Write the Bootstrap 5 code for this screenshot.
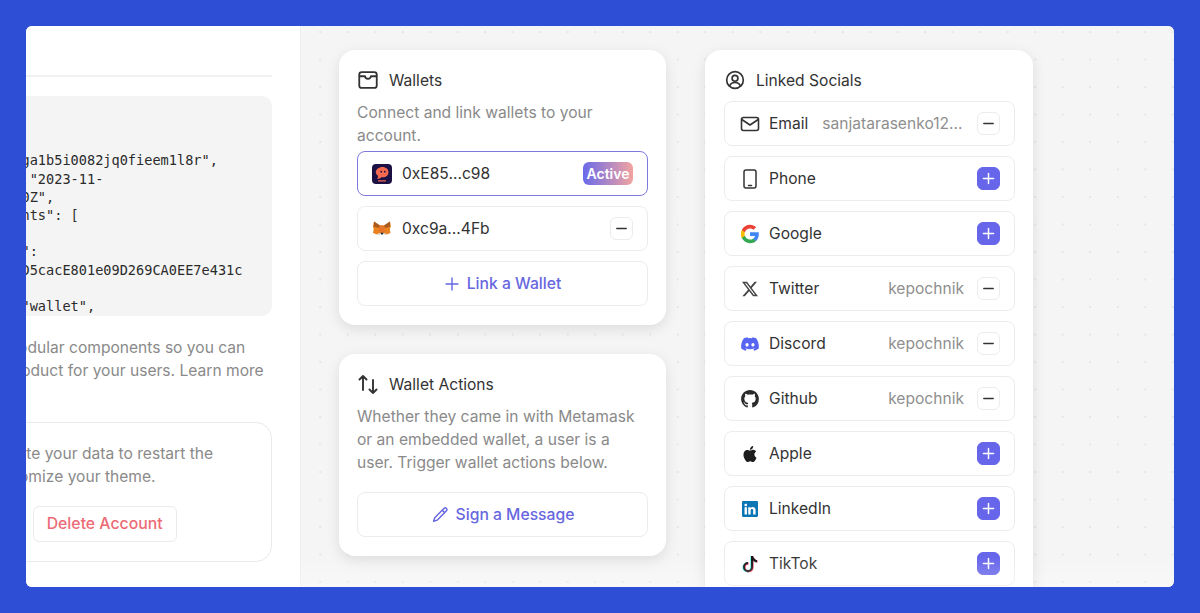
<!DOCTYPE html>
<html lang="en">

<head>
  <meta charset="UTF-8" />
  <meta name="viewport" content="width=device-width, initial-scale=1.0" />
  <title>Account dashboard</title>
  <link href="https://cdn.jsdelivr.net/npm/bootstrap@5.3.3/dist/css/bootstrap.min.css" rel="stylesheet" />
  <style>
    html, body { height: 100%; }
    body { background: #2e4fd5; padding: 26px; overflow: hidden; font-family: Inter, "Liberation Sans", sans-serif; color: #333; font-size: 15.6px; }
    .app-window { height: 561px; border-radius: 6px; overflow: hidden; background: #f5f5f5; position: relative; }
    .app-window::after { content: ""; position: absolute; left: 0; right: 0; bottom: 0; height: 30px; pointer-events: none; background: linear-gradient(rgba(255,255,255,0), rgba(255,255,255,.28)); }
    .side-panel { width: 275px; flex: none; background: #fff; border-right: 1px solid #eee; overflow: hidden; }
    .side-inner { width: 360px; margin-left: -86px; padding-right: 28px; flex: none; }
    .side-rule { height: 51px; border-bottom: 2px solid #f1f1f1; margin-bottom: 19px; }
    .code-box { margin: 0; height: 220px; overflow: hidden; background: #f4f4f4; border-radius: 10px; padding: 19px 16px 0; font-family: "DejaVu Sans Mono", monospace; font-size: 13.6px; line-height: 18.2px; color: #2b2b2b; }
    .side-text { margin: 20px 0 0; line-height: 23px; color: #8a8a8a; white-space: nowrap; }
    .danger-box { margin-top: 17px; height: 140px; border: 1px solid #eaeaea; border-radius: 16px; padding: 19px 28px; }
    .danger-box p { margin: 0 0 18px; line-height: 23px; color: #8a8a8a; white-space: nowrap; }
    .ghost-btn { height: 36px; padding: 0 13px; border: 1px solid #eaeaea; border-radius: 6px; background: #fff; font-weight: 500; font-size: 15.8px; white-space: nowrap; }
    .ghost-btn.red { color: #ec6b75; }
    .main-area { background-color: #f5f5f5; background-image: radial-gradient(circle, #e6e6e6 1px, transparent 1.4px); background-size: 27.5px 27.5px; background-position: 5.5px -7.75px; padding: 24px 0 0 38px; gap: 39px; min-width: 0; }
    .col-stack { width: 327px; flex: none; gap: 29px; }
    .col-stack.wide { width: 328px; }
    .panel-card { background: #fff; border-radius: 16px; padding: 18px 18px 19px; box-shadow: 0 4px 14px rgba(0,0,0,.1); }
    .wide .panel-card { padding-left: 19px; }
    .panel-title { height: 26px; margin-bottom: 7px; gap: 11px; line-height: 24px; padding-left: 1px; }
    .panel-title svg { width: 20px; height: 20px; flex: none; margin-top: -2px; }
    .panel-desc { margin: 0 0 4px; line-height: 23px; color: #8a8a8a; }
    .panel-desc.roomy { margin-bottom: 18px; }
    .stack-rows { gap: 10px; }
    .acct-row { height: 45px; border: 1px solid #ececec; border-radius: 8px; padding: 0 14px; background: #fff; }
    .acct-row.is-active { border-color: #7f79dc; }
    .acct-row .ico { width: 20px; height: 20px; flex: none; }
    .wallet-row { gap: 10px; }
    .social-row { gap: 9px; padding-left: 15px; }
    .acct-value { color: #8f8f8f; min-width: 0; margin-left: 5px; }
    .sq-btn { width: 23px; height: 23px; flex: none; border-radius: 6px; padding: 0; border: 1px solid #ececec; background: #fff; color: #333; }
    .sq-btn.add { background: #6766ea; border-color: #6766ea; color: #fff; }
    .sq-btn svg { width: 13px; height: 13px; display: block; margin: auto; }
    .active-tag { width: 50px; height: 23px; border-radius: 6px; background: linear-gradient(90deg, #6a6aea, #f2a3a0); color: #fff; font-weight: 600; font-size: 14px; line-height: 23px; text-align: center; }
    .link-row { height: 45px; border: 1px solid #ececec; border-radius: 8px; background: #fff; color: #6767e0; font-weight: 500; font-size: 15.7px; gap: 7px; width: 100%; }
    .link-row svg { width: 16px; height: 16px; }
    .link-row svg.pen { width: 18px; height: 18px; }
  </style>
</head>

<body>
  <div class="app-window d-flex">
    <aside class="side-panel d-flex">
      <div class="side-inner">
        <div class="side-rule"></div>
        <pre class="code-box">{
  "id":
clo7h3zqga1b5i0082jq0fieem1l8r",
 "time": "2023-11-
27T10:450Z",
  "accounts": [
    {
   "addr":
"0x71C2aD5cacE801e09D269CA0EE7e431c
",
"type": "wallet",</pre>
        <p class="side-text">Pick our modular components so you can<br>craft the product for your users. Learn more<br>here.</p>
        <div class="danger-box">
          <p>Or, delete your data to restart the<br>to customize your theme.</p>
          <div class="d-flex gap-2">
            <button class="ghost-btn" type="button">Exit</button>
            <button class="ghost-btn red" type="button">Delete Account</button>
          </div>
        </div>
      </div>
    </aside>

    <main class="main-area flex-grow-1 d-flex overflow-hidden">
      <div class="col-stack d-flex flex-column">
        <section class="panel-card">
          <div class="panel-title d-flex align-items-center">
            <svg viewBox="0 0 24 24" fill="none" stroke="#333" stroke-width="2.200" stroke-linecap="round" stroke-linejoin="round"><rect x="1.500" y="2.500" width="21" height="19" rx="3"/><path d="M2 7.500h6.500a3.500 3 0 0 0 7 0H22"/></svg>
            <span>Wallets</span>
          </div>
          <p class="panel-desc">Connect and link wallets to your account.</p>
          <div class="stack-rows d-flex flex-column">
            <div class="acct-row is-active wallet-row d-flex align-items-center">
              <svg class="ico" viewBox="0 0 20 20"><rect width="20" height="20" rx="4" fill="#1b1145"/><path d="M10.500 3c3.600 0 6 2.300 6 5.300 0 3.100-2.500 5-5.500 5l-1.700 0c-.9 1.300-2.300 1.800-4.300 1.700.8-.8 1.100-1.900.9-3.300C4.300 10.600 3.800 9.500 3.800 8.300 3.800 5.300 6.800 3 10.500 3z" fill="#f4694f"/><circle cx="9.200" cy="7.700" r=".9" fill="#1b1145"/><circle cx="12.800" cy="7.700" r=".9" fill="#1b1145"/><rect x="6" y="16.300" width="8" height="1.100" rx=".5" fill="#f4694f"/></svg>
              <span>0xE85...c98</span>
              <span class="active-tag ms-auto">Active</span>
            </div>
            <div class="acct-row wallet-row d-flex align-items-center">
              <svg class="ico" viewBox="0 0 20 20"><path d="M2 2.500 8 6.500h4l6-4 .8 5-1 2.500.7 4-4 1.500-1.500-1.200h-6L5 15.500 1 14l.7-4-.8-2.500z" fill="#e8811f"/><path d="M8 6.500 6.500 11 3 10zM12 6.500 13.500 11l3.500-1z" fill="#f6851b"/><path d="M8 6.500h4l1.500 4.500-1.500 2.800H8L6.500 11z" fill="#e4762b"/><path d="M2 2.500 8 6.500 6.500 9 1.800 7.500zM18 2.500l-6 4 1.500 2.500 4.700-1.500z" fill="#a85a1f"/><path d="M8.500 13.800h3l-.6 1.800H9.100z" fill="#23303f"/><path d="M5 15.500 8 13.800l-.3 2zM15 15.500l-3-1.700.3 2z" fill="#d8c3b2"/></svg>
              <span>0xc9a...4Fb</span>
              <button class="sq-btn ms-auto" type="button" aria-label="Unlink"><svg viewBox="0 0 14 14" fill="none" stroke="currentColor" stroke-width="1.700" stroke-linecap="round"><path d="M2 7h10"/></svg></button>
            </div>
            <button class="link-row d-flex align-items-center justify-content-center" type="button">
              <svg viewBox="0 0 16 16" fill="none" stroke="currentColor" stroke-width="1.400" stroke-linecap="round"><path d="M8 2v12M2 8h12"/></svg>
              Link a Wallet
            </button>
          </div>
        </section>

        <section class="panel-card">
          <div class="panel-title d-flex align-items-center">
            <svg viewBox="0 0 20 20" fill="none" stroke="#333" stroke-width="1.900" stroke-linecap="round" stroke-linejoin="round"><path d="M5 16V2M1.500 5.500 5 2l3.500 3.500M15 6v13M11.500 15.500 15 19l3.500-3.500"/></svg>
            <span>Wallet Actions</span>
          </div>
          <p class="panel-desc roomy">Whether they came in with Metamask or an embedded wallet, a user is a user. Trigger wallet actions below.</p>
          <button class="link-row d-flex align-items-center justify-content-center" type="button">
            <svg class="pen" viewBox="0 0 16 16" fill="none" stroke="currentColor" stroke-width="1.300" stroke-linecap="round" stroke-linejoin="round"><path d="M11.500 2.200a1.500 1.500 0 0 1 2.200 2.100L5.500 12.600l-3.200 1 1-3.100zM10 3.700l2.200 2.200"/></svg>
            Sign a Message
          </button>
        </section>
      </div>

      <div class="col-stack wide d-flex flex-column">
        <section class="panel-card">
          <div class="panel-title d-flex align-items-center">
            <svg viewBox="0 0 24 24" fill="none" stroke="#333" stroke-width="2" stroke-linecap="round" stroke-linejoin="round"><circle cx="12" cy="12" r="10"/><circle cx="12" cy="10" r="3.500"/><path d="M5.500 19.300c1-2.800 3.500-4.300 6.500-4.300s5.500 1.500 6.500 4.300"/></svg>
            <span>Linked Socials</span>
          </div>
          <div class="stack-rows d-flex flex-column">
            <div class="acct-row social-row d-flex align-items-center">
              <svg class="ico" viewBox="0 0 20 20" fill="none" stroke="#333" stroke-width="1.600" stroke-linecap="round" stroke-linejoin="round"><rect x="1.500" y="3.500" width="17" height="13" rx="2"/><path d="M1.800 5.500 10 11l8.200-5.500"/></svg>
              <span>Email</span>
              <span class="acct-value text-truncate flex-grow-1">sanjatarasenko12@gmail.com</span>
              <button class="sq-btn ms-1" type="button" aria-label="Unlink"><svg viewBox="0 0 14 14" fill="none" stroke="currentColor" stroke-width="1.700" stroke-linecap="round"><path d="M2 7h10"/></svg></button>
            </div>
            <div class="acct-row social-row d-flex align-items-center">
              <svg class="ico" viewBox="0 0 20 20" fill="none" stroke="#333" stroke-width="1.500" stroke-linecap="round" stroke-linejoin="round"><rect x="4" y="1" width="12" height="18" rx="2"/><path d="M8.500 16.500h3"/></svg>
              <span>Phone</span>
              <button class="sq-btn add ms-auto" type="button" aria-label="Link"><svg viewBox="0 0 14 14" fill="none" stroke="currentColor" stroke-width="1.600" stroke-linecap="round"><path d="M7 1.500v11M1.500 7h11"/></svg></button>
            </div>
            <div class="acct-row social-row d-flex align-items-center">
              <svg class="ico" viewBox="0 0 24 24"><path fill="#4285F4" d="M22.560 12.250c0-.78-.07-1.530-.2-2.250H12v4.260h5.920c-.26 1.370-1.040 2.530-2.210 3.310v2.770h3.570c2.080-1.920 3.280-4.740 3.280-8.090z"/><path fill="#34A853" d="M12 23c2.970 0 5.460-.98 7.280-2.660l-3.570-2.770c-.98.66-2.230 1.060-3.710 1.060-2.860 0-5.290-1.930-6.160-4.530H2.180v2.840C3.990 20.530 7.700 23 12 23z"/><path fill="#FBBC05" d="M5.840 14.090c-.22-.66-.35-1.360-.35-2.090s.13-1.430.35-2.090V7.070H2.180C1.430 8.550 1 10.220 1 12s.43 3.450 1.180 4.930l2.850-2.220.81-.62z"/><path fill="#EA4335" d="M12 5.380c1.620 0 3.060.56 4.210 1.640l3.150-3.150C17.450 2.090 14.970 1 12 1 7.700 1 3.990 3.470 2.180 7.070l3.660 2.840c.87-2.600 3.300-4.530 6.160-4.530z"/></svg>
              <span>Google</span>
              <button class="sq-btn add ms-auto" type="button" aria-label="Link"><svg viewBox="0 0 14 14" fill="none" stroke="currentColor" stroke-width="1.600" stroke-linecap="round"><path d="M7 1.500v11M1.500 7h11"/></svg></button>
            </div>
            <div class="acct-row social-row d-flex align-items-center">
              <svg class="ico" viewBox="-2 -2 20 20" fill="#444"><path d="M12.600.75h2.454l-5.360 6.142L16 15.250h-4.937l-3.867-5.070-4.425 5.070H.316l5.733-6.570L0 .75h5.063l3.495 4.633L12.601.75Zm-.86 13.028h1.360L4.323 2.145H2.865l8.875 11.633Z"/></svg>
              <span>Twitter</span>
              <span class="acct-value text-truncate ms-auto">kepochnik</span>
              <button class="sq-btn ms-1" type="button" aria-label="Unlink"><svg viewBox="0 0 14 14" fill="none" stroke="currentColor" stroke-width="1.700" stroke-linecap="round"><path d="M2 7h10"/></svg></button>
            </div>
            <div class="acct-row social-row d-flex align-items-center">
              <svg class="ico" viewBox="-1 -1 18 18" fill="#5865f2"><path d="M13.545 2.907a13.227 13.227 0 0 0-3.257-1.011.05.05 0 0 0-.052.025c-.141.25-.297.577-.406.833a12.19 12.19 0 0 0-3.658 0 8.258 8.258 0 0 0-.412-.833.051.051 0 0 0-.052-.025c-1.125.194-2.220.534-3.257 1.011a.041.041 0 0 0-.021.018C.356 6.024-.213 9.047.066 12.032c.001.014.01.028.021.037a13.276 13.276 0 0 0 3.995 2.020.05.05 0 0 0 .056-.019c.308-.42.582-.863.818-1.329a.05.05 0 0 0-.01-.059.051.051 0 0 0-.018-.011 8.875 8.875 0 0 1-1.248-.595.05.05 0 0 1-.02-.066.051.051 0 0 1 .015-.019c.084-.063.168-.129.248-.195a.05.05 0 0 1 .051-.007c2.619 1.196 5.454 1.196 8.041 0a.052.052 0 0 1 .053.007c.08.066.164.132.248.195a.051.051 0 0 1-.004.085 8.254 8.254 0 0 1-1.249.594.05.05 0 0 0-.03.03.052.052 0 0 0 .003.041c.24.465.515.909.817 1.329a.05.05 0 0 0 .056.019 13.235 13.235 0 0 0 4.001-2.020.049.049 0 0 0 .021-.037c.334-3.451-.559-6.449-2.366-9.106a.034.034 0 0 0-.02-.019Zm-8.198 7.307c-.789 0-1.438-.724-1.438-1.612 0-.889.637-1.613 1.438-1.613.807 0 1.450.73 1.438 1.613 0 .888-.637 1.612-1.438 1.612Zm5.316 0c-.788 0-1.438-.724-1.438-1.612 0-.889.637-1.613 1.438-1.613.807 0 1.451.73 1.438 1.613 0 .888-.631 1.612-1.438 1.612Z"/></svg>
              <span>Discord</span>
              <span class="acct-value text-truncate ms-auto">kepochnik</span>
              <button class="sq-btn ms-1" type="button" aria-label="Unlink"><svg viewBox="0 0 14 14" fill="none" stroke="currentColor" stroke-width="1.700" stroke-linecap="round"><path d="M2 7h10"/></svg></button>
            </div>
            <div class="acct-row social-row d-flex align-items-center">
              <svg class="ico" viewBox="-1 -1 18 18" fill="#2b2b2b"><path d="M8 0C3.580 0 0 3.580 0 8c0 3.540 2.290 6.530 5.470 7.590.4.07.55-.17.55-.38 0-.19-.01-.82-.01-1.490-2.010.37-2.530-.49-2.690-.94-.09-.23-.48-.94-.82-1.130-.28-.15-.68-.52-.01-.53.63-.01 1.080.58 1.230.82.72 1.210 1.870.87 2.330.66.07-.52.28-.87.51-1.070-1.780-.2-3.640-.89-3.640-3.950 0-.87.31-1.590.82-2.150-.08-.2-.36-1.020.08-2.120 0 0 .67-.21 2.200.82.64-.18 1.320-.27 2-.27.68 0 1.360.09 2 .27 1.530-1.040 2.200-.82 2.200-.82.44 1.100.16 1.920.08 2.120.51.56.82 1.270.82 2.150 0 3.070-1.870 3.750-3.650 3.950.29.25.54.73.54 1.480 0 1.070-.01 1.930-.01 2.200 0 .21.15.46.55.38A8.012 8.012 0 0 0 16 8c0-4.420-3.580-8-8-8z"/></svg>
              <span>Github</span>
              <span class="acct-value text-truncate ms-auto">kepochnik</span>
              <button class="sq-btn ms-1" type="button" aria-label="Unlink"><svg viewBox="0 0 14 14" fill="none" stroke="currentColor" stroke-width="1.700" stroke-linecap="round"><path d="M2 7h10"/></svg></button>
            </div>
            <div class="acct-row social-row d-flex align-items-center">
              <svg class="ico" viewBox="-2 -2 20 20" fill="#1d1d1d"><path d="M11.182.008C11.148-.03 9.923.023 8.857 1.180c-1.066 1.156-.902 2.482-.878 2.516.024.034 1.520.087 2.475-1.258.955-1.345.762-2.391.728-2.430Zm3.314 11.733c-.048-.096-2.325-1.234-2.113-3.422.212-2.189 1.675-2.789 1.698-2.854.023-.065-.597-.79-1.254-1.157a3.692 3.692 0 0 0-1.563-.434c-.108-.003-.483-.095-1.254.116-.508.139-1.653.589-1.968.607-.316.018-1.256-.522-2.267-.665-.647-.125-1.333.131-1.824.328-.49.196-1.422.754-2.074 2.237-.652 1.482-.311 3.830-.067 4.560.244.729.625 1.924 1.273 2.796.576.984 1.340 1.667 1.659 1.899.319.232 1.219.386 1.843.067.502-.308 1.408-.485 1.766-.472.357.013 1.061.154 1.782.539.571.197 1.111.115 1.652-.105.541-.221 1.324-1.059 2.238-2.758.347-.79.505-1.217.473-1.282Z"/></svg>
              <span>Apple</span>
              <button class="sq-btn add ms-auto" type="button" aria-label="Link"><svg viewBox="0 0 14 14" fill="none" stroke="currentColor" stroke-width="1.600" stroke-linecap="round"><path d="M7 1.500v11M1.500 7h11"/></svg></button>
            </div>
            <div class="acct-row social-row d-flex align-items-center">
              <svg class="ico" viewBox="-2 -2 20 20" fill="#0a76b4"><path d="M0 1.146C0 .513.526 0 1.175 0h13.650C15.474 0 16 .513 16 1.146v13.708c0 .633-.526 1.146-1.175 1.146H1.175C.526 16 0 15.487 0 14.854V1.146zm4.943 12.248V6.169H2.542v7.225h2.401zm-1.200-8.212c.837 0 1.358-.554 1.358-1.248-.015-.709-.52-1.248-1.342-1.248-.822 0-1.359.54-1.359 1.248 0 .694.521 1.248 1.327 1.248h.016zm4.908 8.212V9.359c0-.216.016-.432.08-.586.173-.431.568-.878 1.232-.878.869 0 1.216.662 1.216 1.634v3.865h2.401V9.250c0-2.220-1.184-3.252-2.764-3.252-1.274 0-1.845.7-2.165 1.193v.025h-.016a5.540 5.540 0 0 1 .016-.025V6.169h-2.400c.03.678 0 7.225 0 7.225h2.400z"/></svg>
              <span>LinkedIn</span>
              <button class="sq-btn add ms-auto" type="button" aria-label="Link"><svg viewBox="0 0 14 14" fill="none" stroke="currentColor" stroke-width="1.600" stroke-linecap="round"><path d="M7 1.500v11M1.500 7h11"/></svg></button>
            </div>
            <div class="acct-row social-row d-flex align-items-center">
              <svg class="ico" viewBox="-2 -2 20 20"><path fill="#25f4ee" transform="translate(-.6 .5)" d="M9 0h1.980c.144.715.54 1.617 1.235 2.512C12.895 3.389 13.797 4 15 4v2c-1.753 0-3.070-.814-4-1.829V11a5 5 0 1 1-5-5v2a3 3 0 1 0 3 3V0Z"/><path fill="#fe2c55" transform="translate(.6 .5)" d="M9 0h1.980c.144.715.54 1.617 1.235 2.512C12.895 3.389 13.797 4 15 4v2c-1.753 0-3.070-.814-4-1.829V11a5 5 0 1 1-5-5v2a3 3 0 1 0 3 3V0Z"/><path fill="#161616" d="M9 0h1.980c.144.715.54 1.617 1.235 2.512C12.895 3.389 13.797 4 15 4v2c-1.753 0-3.070-.814-4-1.829V11a5 5 0 1 1-5-5v2a3 3 0 1 0 3 3V0Z"/></svg>
              <span>TikTok</span>
              <button class="sq-btn add ms-auto" type="button" aria-label="Link"><svg viewBox="0 0 14 14" fill="none" stroke="currentColor" stroke-width="1.600" stroke-linecap="round"><path d="M7 1.500v11M1.500 7h11"/></svg></button>
            </div>
          </div>
        </section>
      </div>
    </main>
  </div>
  <script src="https://cdn.jsdelivr.net/npm/bootstrap@5.3.3/dist/js/bootstrap.bundle.min.js"></script>
</body>

</html>
